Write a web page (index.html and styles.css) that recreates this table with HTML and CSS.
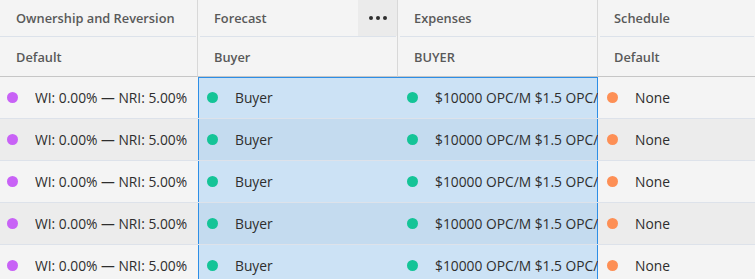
FILE: index.html
```html
<!DOCTYPE html>
<html>
<head>
<meta charset="utf-8">
<link rel="stylesheet" href="styles.css">
</head>
<body>
<div class="grid">
  <div class="hcell h1 vr"><span class="htext">Ownership and Reversion</span></div>
  <div class="hcell h1 vr first-gap"><span class="htext">Forecast</span><span class="more"><i></i><i></i><i></i></span></div>
  <div class="hcell h1 vr first-gap"><span class="htext">Expenses</span></div>
  <div class="hcell h1 first-gap"><span class="htext">Schedule</span></div>

  <div class="hcell h2 vr"><span class="htext">Default</span></div>
  <div class="hcell h2 vr"><span class="htext">Buyer</span></div>
  <div class="hcell h2 vr"><span class="htext">BUYER</span></div>
  <div class="hcell h2"><span class="htext">Default</span></div>

  <div class="cell c1 r1 top"><span class="dot purple"></span><span class="txt">WI: 0.00% — NRI: 5.00%</span></div>
  <div class="cell r1 sel sl top"><span class="dot green"></span><span class="txt">Buyer</span></div>
  <div class="cell r1 sel sr top"><span class="dot green"></span><span class="txt">$10000 OPC/M $1.5 OPC/</span></div>
  <div class="cell r1 top"><span class="dot orange"></span><span class="txt">None</span></div>

  <div class="cell c1 r2"><span class="dot purple"></span><span class="txt">WI: 0.00% — NRI: 5.00%</span></div>
  <div class="cell r2 sel sl"><span class="dot green"></span><span class="txt">Buyer</span></div>
  <div class="cell r2 sel sr"><span class="dot green"></span><span class="txt">$10000 OPC/M $1.5 OPC/</span></div>
  <div class="cell r2"><span class="dot orange"></span><span class="txt">None</span></div>

  <div class="cell c1 r1"><span class="dot purple"></span><span class="txt">WI: 0.00% — NRI: 5.00%</span></div>
  <div class="cell r1 sel sl"><span class="dot green"></span><span class="txt">Buyer</span></div>
  <div class="cell r1 sel sr"><span class="dot green"></span><span class="txt">$10000 OPC/M $1.5 OPC/</span></div>
  <div class="cell r1"><span class="dot orange"></span><span class="txt">None</span></div>

  <div class="cell c1 r2"><span class="dot purple"></span><span class="txt">WI: 0.00% — NRI: 5.00%</span></div>
  <div class="cell r2 sel sl"><span class="dot green"></span><span class="txt">Buyer</span></div>
  <div class="cell r2 sel sr"><span class="dot green"></span><span class="txt">$10000 OPC/M $1.5 OPC/</span></div>
  <div class="cell r2"><span class="dot orange"></span><span class="txt">None</span></div>

  <div class="cell c1 r1"><span class="dot purple"></span><span class="txt">WI: 0.00% — NRI: 5.00%</span></div>
  <div class="cell r1 sel sl"><span class="dot green"></span><span class="txt">Buyer</span></div>
  <div class="cell r1 sel sr"><span class="dot green"></span><span class="txt">$10000 OPC/M $1.5 OPC/</span></div>
  <div class="cell r1"><span class="dot orange"></span><span class="txt">None</span></div>
</div>
</body>
</html>
```

FILE: styles.css
```css
html, body {
  margin: 0;
  padding: 0;
  background: #f4f4f4;
  overflow: hidden;
}
body {
  font-family: "Open Sans", "Noto Sans", sans-serif;
  width: 755px;
  height: 279px;
}
.grid {
  display: grid;
  grid-template-columns: 198px 200px 200px 157px;
  grid-auto-rows: auto;
}
.hcell {
  background-color: #f4f4f4;
  display: flex;
  align-items: center;
  box-sizing: border-box;
  padding-left: 16px;
  color: #595959;
  font-size: 12.8px;
  font-weight: 600;
  white-space: nowrap;
  overflow: hidden;
}
.vr {
  border-right: 1px solid #d8d8d8;
}
.h1 {
  height: 37px;
  padding-bottom: 2px;
  background-image: linear-gradient(#dce2ea, #dce2ea);
  background-repeat: no-repeat;
  background-size: calc(100% - 1px) 1px;
  background-position: 0 100%;
}
.h1.first-gap {
  background-size: calc(100% - 3px) 1px;
  background-position: 2px 100%;
}
.h2 {
  height: 40px;
  padding-top: 1px;
  border-bottom: 1px solid #c6c6c6;
}
.more {
  margin-left: auto;
  align-self: stretch;
  width: 39px;
  margin-bottom: -1px;
  background: #ebebeb;
  display: flex;
  align-items: center;
  justify-content: center;
  gap: 3px;
}
.more i {
  width: 4px;
  height: 4px;
  border-radius: 50%;
  background: #2f2f2f;
}
.cell {
  height: 42px;
  box-sizing: border-box;
  border-bottom: 1px solid #dde2ea;
  display: flex;
  align-items: center;
  padding-left: 9px;
  white-space: nowrap;
  overflow: hidden;
  font-size: 13.8px;
  color: #2e2e2e;
}
.cell.c1 { padding-left: 7px; }
.r1 { background: #f4f4f4; }
.r2 { background: #ececec; }
.r1.sel { background: #cce2f5; }
.r2.sel { background: #c4dbef; }
.sl { box-shadow: inset 1px 0 0 #2d8ee6; }
.sr { box-shadow: inset -1px 0 0 #2d8ee6; }
.sl.top { box-shadow: inset 1px 0 0 #2d8ee6, inset 0 1px 0 #2d8ee6; }
.sr.top { box-shadow: inset -1px 0 0 #2d8ee6, inset 0 1px 0 #2d8ee6; }
.dot {
  flex: none;
  width: 11px;
  height: 11px;
  border-radius: 50%;
  margin-right: 17px;
}
.purple { background: #c862f6; }
.green { background: #14c497; }
.orange { background: #fd8f55; }
.txt {
  overflow: hidden;
}
```
